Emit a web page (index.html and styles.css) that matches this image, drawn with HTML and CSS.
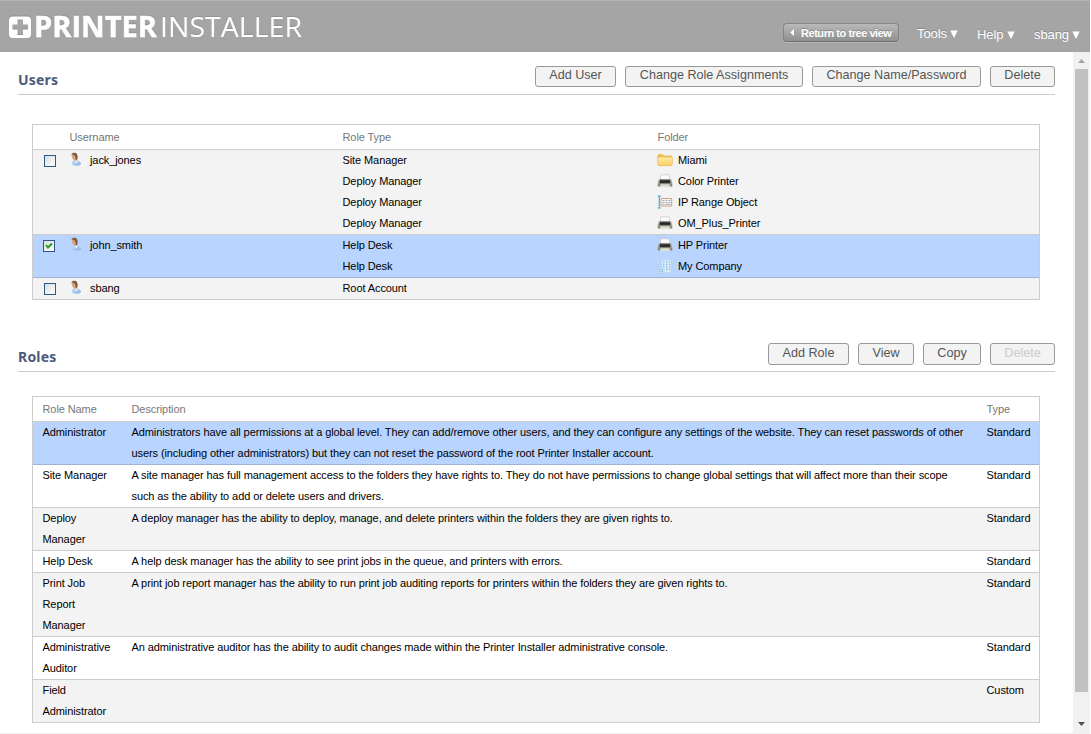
FILE: index.html
```
<!DOCTYPE html>
<html lang="en">
<head>
<meta charset="utf-8">
<title>Printer Installer</title>
<link rel="stylesheet" href="styles.css">
</head>
<body>
<svg class="defs" width="0" height="0">
  <defs>
    <linearGradient id="gBody" x1="0" y1="0" x2="1" y2="1"><stop offset="0" stop-color="#c3dbf5"/><stop offset="1" stop-color="#8bb6e4"/></linearGradient>
    <linearGradient id="gFold" x1="0" y1="0" x2="0" y2="1"><stop offset="0" stop-color="#ffe9a3"/><stop offset="1" stop-color="#fbd266"/></linearGradient>
    <linearGradient id="gPrn" x1="0" y1="0" x2="0" y2="1"><stop offset="0" stop-color="#777"/><stop offset=".5" stop-color="#222"/><stop offset="1" stop-color="#444"/></linearGradient>
    <symbol id="user" viewBox="0 0 12 15">
      <path d="M3.200 8.500C4.500 7.600 6 7.800 7.500 8.600C9.300 9 11 10.300 11 11.800C10.800 13.400 8.500 14 6 13.800C3.800 13.600 2 13 2 11.500C2 10.200 2.500 9.200 3.200 8.500Z" fill="url(#gBody)"/>
      <path d="M4.500 8L7.500 9L6.300 11.300Z" fill="#fff"/>
      <path d="M1.500 2.500C2.200 .5 6 .5 7 3C7.600 5.500 7 8 5.800 8.800C4 8.500 2.500 7.500 2 5.500Z" fill="#d5a57f"/>
      <path d="M1.500 2.300C2.500 .2 5.800 .2 7 2.200C8 4 7.800 6.700 6.800 8.300L5.800 8.600C6 7 5.600 5 4.600 3.400C3.600 2.600 2.300 2.700 1.500 2.300Z" fill="#7d5c42"/>
    </symbol>
    <symbol id="folder" viewBox="0 0 16 14">
      <path d="M.8 3Q.8 1.500 2.100 1.500H5.500L7 3H13.800Q15.200 3 15.200 4.500V11Q15.200 12.600 13.700 12.600H2.300Q.8 12.600 .8 11Z" fill="#efc254" stroke="#e3b75a" stroke-width=".8"/>
      <path d="M1.200 5.500Q1.200 4.500 2.400 4.500H13.700Q14.900 4.500 14.900 5.500V11Q14.900 12.200 13.600 12.200H2.400Q1.200 12.200 1.200 11Z" fill="url(#gFold)"/>
    </symbol>
    <symbol id="printer" viewBox="0 0 16 14">
      <path d="M3.600 .8H12.400V6H3.600Z" fill="#fafafa" stroke="#c9c9c9" stroke-width=".7"/>
      <path d="M1.800 5.200H3.600V6H12.400V5.200H14.200L15.200 8.500V12.300H.8V8.500Z" fill="#a9ab9b"/>
      <path d="M3 5.300H13L13.600 9.500H2.400Z" fill="url(#gPrn)"/>
      <path d="M.8 9.500H15.200V12.500H.8Z" fill="#8b8d7c"/>
      <path d="M3.500 10.300H12.500L13 13H3Z" fill="#dedfd4"/>
    </symbol>
    <symbol id="range" viewBox="0 0 16 14">
      <path d="M.8 1.200H3.800M2.300 1.200V13M.8 13H3.800" stroke="#45ade4" stroke-width="1.200" fill="none"/>
      <path d="M4 3.500H14.700V11H4Z" fill="#f7f7f5" stroke="#cfa282"/>
      <path d="M5.500 5.500H7.500M5.500 7.500H7.500M8.500 5.500H10.500M8.500 7.500H10.500M11.500 5.500H13.500M11.500 7.500H13.500M5.500 9.300H7.500M8.500 9.300H13.500" stroke="#94a2b3" stroke-width=".9"/>
    </symbol>
    <symbol id="company" viewBox="0 0 16 15">
      <path d="M4.500 1L13.800 .5V13.800L4.500 13Z" fill="#dcecfa" stroke="#b3cfe8" stroke-width=".6"/>
      <path d="M.8 8.500L7 7.500V14.700L.8 14Z" fill="#cfe4f6" stroke="#a5c7e4" stroke-width=".6"/>
      <path d="M6 3H7.500M9 3H10.500M12 3H13M6 5.500H7.500M9 5.500H10.500M12 5.500H13M9 8H10.500M12 8H13M9 10.500H10.500M12 10.500H13M2 10.500H3.300M4.500 10.500H5.800M2 12.500H3.300M4.500 12.500H5.800" stroke="#7dc3ea" stroke-width="1.400"/>
    </symbol>
  </defs>
</svg>
<div class="page">
  <header class="bar">
    <svg class="logo" width="310" height="51" viewBox="0 0 310 51">
      <path fill="#fff" fill-rule="evenodd" d="M13 15.500H27Q31 15.500 31 19.500V33Q31 37 27 37H13Q9 37 9 33V19.500Q9 15.500 13 15.500ZM17.500 18.500V23.500H12.500V28.500H17.500V34H23V28.500H28V23.500H23V18.500Z"/>
      <text class="logo-bold" x="34" y="36" textLength="123" lengthAdjust="spacingAndGlyphs">PRINTER</text>
      <text class="logo-light" x="160" y="36" textLength="142" lengthAdjust="spacingAndGlyphs">INSTALLER</text>
    </svg>
    <nav class="menu">
      <a class="back"><svg width="4" height="7" viewBox="0 0 4 7"><path d="M4 0V7L.3 3.500Z" fill="#fff"/></svg><span>Return to tree view</span></a>
      <a class="item tools">Tools <svg width="8" height="8" viewBox="0 0 8 8"><path d="M.3 .5H7.700L4 8Z" fill="#fff"/></svg></a>
      <a class="item help">Help <svg width="8" height="8" viewBox="0 0 8 8"><path d="M.3 .5H7.700L4 8Z" fill="#fff"/></svg></a>
      <a class="item me">sbang <svg width="8" height="8" viewBox="0 0 8 8"><path d="M.3 .5H7.700L4 8Z" fill="#fff"/></svg></a>
    </nav>
  </header>
  <div class="body">
    <main class="content">
      <section class="head">
        <h2>Users</h2>
        <div class="buttons"><button class="w81">Add User</button><button class="w178">Change Role Assignments</button><button class="w169">Change Name/Password</button><button class="w65">Delete</button></div>
      </section>
      <div class="table users">
        <div class="row th"><span></span><span>Username</span><span>Role Type</span><span>Folder</span></div>
        <div class="row alt">
          <span class="check"><i></i></span>
          <span class="name"><svg width="12" height="15"><use href="#user"/></svg>jack_jones</span>
          <span>Site Manager<br>Deploy Manager<br>Deploy Manager<br>Deploy Manager</span>
          <span class="folders">
            <b><svg width="16" height="14"><use href="#folder"/></svg>Miami</b>
            <b><svg width="16" height="14"><use href="#printer"/></svg>Color Printer</b>
            <b><svg width="16" height="14"><use href="#range"/></svg>IP Range Object</b>
            <b><svg width="16" height="14"><use href="#printer"/></svg>OM_Plus_Printer</b>
          </span>
        </div>
        <div class="row sel">
          <span class="check on"><i><svg width="10" height="10" viewBox="0 0 10 10"><path d="M2 4L4 6.500L8 2.500" fill="none" stroke="#21a121" stroke-width="2"/></svg></i></span>
          <span class="name"><svg width="12" height="15"><use href="#user"/></svg>john_smith</span>
          <span>Help Desk<br>Help Desk</span>
          <span class="folders">
            <b><svg width="16" height="14"><use href="#printer"/></svg>HP Printer</b>
            <b><svg width="16" height="15"><use href="#company"/></svg>My Company</b>
          </span>
        </div>
        <div class="row alt">
          <span class="check"><i></i></span>
          <span class="name"><svg width="12" height="15"><use href="#user"/></svg>sbang</span>
          <span>Root Account</span><span></span>
        </div>
      </div>
      <section class="head second">
        <h2>Roles</h2>
        <div class="buttons"><button class="w81">Add Role</button><button class="w56">View</button><button class="w58">Copy</button><button class="w65 off">Delete</button></div>
      </section>
      <div class="table roles">
        <div class="row th"><span>Role Name</span><span>Description</span><span>Type</span></div>
        <div class="row sel"><span>Administrator</span><span>Administrators have all permissions at a global level. They can add/remove other users, and they can configure any settings of the website. They can reset passwords of other<br>users (including other administrators) but they can not reset the password of the root Printer Installer account.</span><span>Standard</span></div>
        <div class="row"><span>Site Manager</span><span>A site manager has full management access to the folders they have rights to. They do not have permissions to change global settings that will affect more than their scope<br>such as the ability to add or delete users and drivers.</span><span>Standard</span></div>
        <div class="row alt"><span>Deploy<br>Manager</span><span>A deploy manager has the ability to deploy, manage, and delete printers within the folders they are given rights to.</span><span>Standard</span></div>
        <div class="row"><span>Help Desk</span><span>A help desk manager has the ability to see print jobs in the queue, and printers with errors.</span><span>Standard</span></div>
        <div class="row alt"><span>Print Job<br>Report<br>Manager</span><span>A print job report manager has the ability to run print job auditing reports for printers within the folders they are given rights to.</span><span>Standard</span></div>
        <div class="row"><span>Administrative<br>Auditor</span><span>An administrative auditor has the ability to audit changes made within the Printer Installer administrative console.</span><span>Standard</span></div>
        <div class="row alt"><span>Field<br>Administrator</span><span></span><span>Custom</span></div>
      </div>
    </main>
    <aside class="scroll">
      <svg width="7" height="4" viewBox="0 0 7 4"><path d="M0 4H7L3.500 0Z" fill="#a3a3a3"/></svg>
      <div class="thumb"></div>
      <svg class="down" width="7" height="4" viewBox="0 0 7 4"><path d="M0 0H7L3.500 4Z" fill="#505050"/></svg>
    </aside>
  </div>
</div>
</body>
</html>
```
FILE: styles.css
```
* { box-sizing: border-box; }
body { margin: 0; background: #fff; font-family: "Liberation Sans", Arial, sans-serif; font-size: 11px; color: #000; overflow: hidden; }
.defs { display: block; height: 0; }
.page { width: 1090px; height: 734px; display: flex; flex-direction: column; border-bottom: 1px solid #f0f0f0; }
.bar { height: 52px; flex: none; background: #a5a5a5; border-top: 1px solid #b3b3b3; display: flex; justify-content: space-between; }
.logo { display: block; filter: drop-shadow(0 -1px 0 #929292); }
.logo text { fill: #fff; font-family: "Open Sans", "Noto Sans", sans-serif; font-size: 28px; }
.logo .logo-bold { font-weight: 700; stroke: #fff; stroke-width: .5px; }
.logo .logo-light { font-weight: 400; }
.menu { display: flex; align-items: flex-start; color: #fff; text-shadow: 0 -1px 0 #8a8a8a; }
.back { display: flex; align-items: center; width: 116px; height: 19px; margin: 22px 18px 0 0; padding-left: 6px; border: 1px solid #858585; border-bottom-color: #6e6e6e; border-radius: 4px; background: linear-gradient(#b9b9b9, #909090); font-weight: 700; font-size: 11px; box-shadow: 0 1px 0 #b8b8b8; white-space: nowrap; }
.back span { margin-left: 7px; letter-spacing: -0.450px; }
.item { font-size: 13px; line-height: 16px; white-space: pre; display: block; }
.tools { width: 60px; margin-top: 25px; }
.help { width: 57px; margin-top: 26px; }
.me { width: 56px; margin-top: 26px; }
.tools, .help, .me { letter-spacing: -0.100px; }
.body { flex: 1; display: flex; min-height: 0; }
.content { flex: 1; padding: 0 18px; }
.head { display: flex; justify-content: space-between; height: 43px; border-bottom: 1px solid #ccc; }
h2 { margin: 18px 0 0; font: 700 14px/20px "Noto Sans", "Open Sans", sans-serif; letter-spacing: 0.200px; color: #4c5b7b; }
.buttons { display: flex; gap: 9px; padding-top: 14px; }
button { height: 21px; padding: 0 0 2px; border: 1px solid #999; border-radius: 3px; background: #f3f3f3; color: #555; font: 12.600px/17px "Liberation Sans", Arial, sans-serif; white-space: nowrap; }
.off { color: #ccc; }
.w81 { width: 81px; }
.w178 { width: 178px; }
.w169 { width: 169px; }
.w65 { width: 65px; }
.w56 { width: 56px; }
.w58 { width: 58px; }
.second { margin-top: 29px; }
.second .buttons button { height: 22px; }
.table { width: 1008px; border: 1px solid #ccc; border-bottom: 0; line-height: 21px; letter-spacing: -0.092px; white-space: nowrap; }
.users { margin: 29px 0 0 14px; }
.roles { margin: 24px 0 0 14px; }
.row { display: grid; border-bottom: 1px solid #ccc; }
.users .row { grid-template-columns: 36.500px 273px 315px 1fr; }
.roles .row { grid-template-columns: 89px 855px 1fr; padding-left: 9.500px; }
.th { line-height: 24px; color: #777; }
.alt { background: #f3f3f3; }
.sel { background: #b9d4fe; border-bottom-color: #9fb4d3; }
.check { padding: 5px 0 0 11px; }
.check i { display: block; width: 12px; height: 12px; border: 1px solid #2a5886; background: linear-gradient(135deg, #dcdcdc, #fff); }
.check.on { padding-left: 10px; }
.check svg { display: block; }
.name { display: flex; gap: 8px; padding-left: .5px; }
.name svg { margin-top: 2px; }
.folders b { display: flex; gap: 5px; font-weight: 400; height: 21px; margin-left: -.5px; }
.folders svg { margin-top: 3px; }
.scroll { width: 17px; background: #f1f1f1; display: flex; flex-direction: column; align-items: center; padding-top: 7px; }
.scroll svg { display: block; }
.thumb { width: 13px; height: 623px; margin-top: 6px; background: #c1c1c1; }
.down { margin-top: 30px; }
```
